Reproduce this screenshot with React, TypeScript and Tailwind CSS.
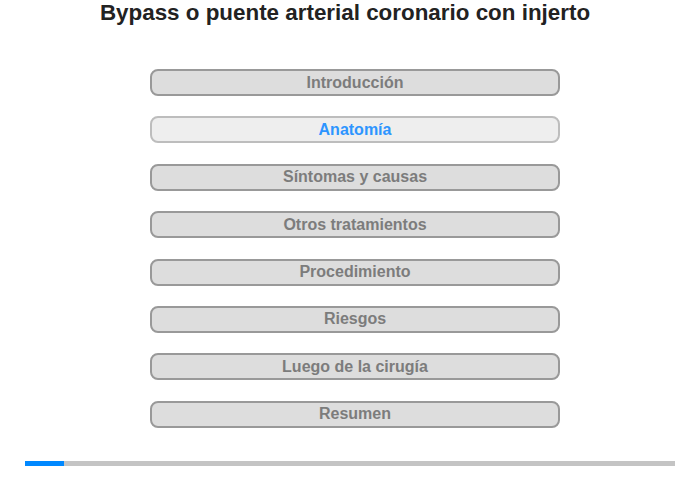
const sections = [
  'Introducción',
  'Anatomía',
  'Síntomas y causas',
  'Otros tratamientos',
  'Procedimiento',
  'Riesgos',
  'Luego de la cirugía',
  'Resumen',
]

export default function App() {
  const active = 1
  return (
    <div className="w-[700px] h-[480px] bg-white font-['Liberation_Sans',Arial,sans-serif] flex flex-col">
      <h1 className="text-center text-[22.4px] leading-[25px] font-bold text-[#222] pr-[10px]">
        Bypass o puente arterial coronario con injerto
      </h1>
      <div className="mt-[44px] pl-[10px] flex flex-col items-center gap-[20.4px]">
        {sections.map((s, i) => (
          <button
            key={s}
            className={
              i === active
                ? 'w-[410px] h-[27px] rounded-[8px] border-2 border-[#bdbdbd] bg-[#eeeeee] text-[#2d95ff] text-[16px] font-bold leading-none'
                : 'w-[410px] h-[27px] rounded-[8px] border-2 border-[#999999] bg-[#dddddd] text-[#7c7c7c] text-[16px] font-bold leading-none'
            }
          >
            {s}
          </button>
        ))}
      </div>
      <div className="mt-[33px] mx-[25px] h-[5px] bg-[#c4c4c4] flex">
        <div className="w-[39px] h-full bg-[#0088ff]" />
      </div>
    </div>
  )
}
